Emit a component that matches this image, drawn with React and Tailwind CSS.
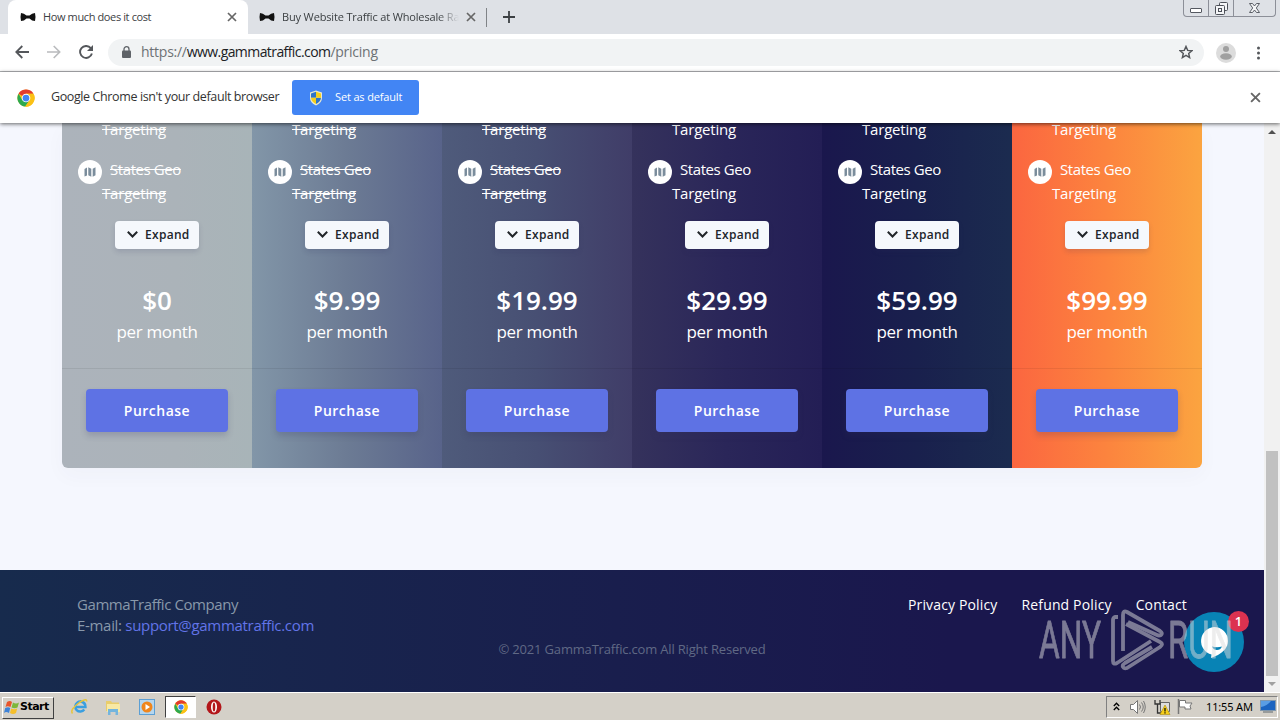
import React from 'react';

const plans = [
  { price: '$0', off: true, bg: 'bg-[linear-gradient(90deg,#acb3bb,#abb3b9_60%,#a8b4b8)]' },
  { price: '$9.99', off: true, bg: 'bg-[linear-gradient(90deg,#8296a8,#6c7b94_50%,#58638a)]' },
  { price: '$19.99', off: true, bg: 'bg-[linear-gradient(90deg,#4f5b7b,#474f73_50%,#403d68)]' },
  { price: '$29.99', off: false, bg: 'bg-[linear-gradient(90deg,#35325c,#2a2659_50%,#231e55)]' },
  { price: '$59.99', off: false, bg: 'bg-[linear-gradient(90deg,#1a174d,#19204d_50%,#1b2b4f)]' },
  { price: '$99.99', off: false, bg: 'bg-[linear-gradient(90deg,#fb6640,#fc843e_50%,#fba440)]' },
];

const BowTie = () => (
  <svg width="16" height="10" viewBox="0 0 16 10">
    <path d="M1 1q3 0 5.500 2.500h3Q12 1 15 1q1 4 0 8-3 0-5.500-2.500h-3Q4 9 1 9 0 5 1 1z" fill="#111" />
  </svg>
);

const Cross = ({ size = 10 }) => (
  <svg width={size} height={size} viewBox="0 0 10 10">
    <path d="M1 1l8 8M9 1L1 9" stroke="#666" strokeWidth="1.700" fill="none" />
  </svg>
);

const ChromeLogo = ({ size = 18 }) => (
  <svg width={size} height={size} viewBox="0 0 48 48">
    <circle cx="24" cy="24" r="23" fill="#fbc116" />
    <path d="M24 24L4.100 12.500A23 23 0 0 1 43.900 12.500H24z" fill="#e33b2e" />
    <path d="M4.100 12.500A23 23 0 0 0 22 46.900L34 29.500 24 24 14 29.500z" fill="#2da94f" />
    <path d="M24 12.500h19.900A23 23 0 0 1 22 46.900L34 29.500z" fill="#fbc116" />
    <circle cx="24" cy="24" r="11.500" fill="#fff" />
    <circle cx="24" cy="24" r="9" fill="#4285f4" />
  </svg>
);

const Shield = () => (
  <svg width="14" height="16" viewBox="0 0 14 16">
    <path d="M7 .5l6 2V8q0 5-6 7.500Q1 13 1 8V2.500z" fill="#e8e8d0" />
    <path d="M7 1.800v6H2V3.400zM7 7.800h5q-.3 4-5 6.300z" fill="#2f74c8" />
    <path d="M7 1.800v6h5V3.400zM7 7.800H2q.3 4 5 6.300z" fill="#f5cf1c" />
  </svg>
);

const TabStrip = () => (
  <div className="h-[34px] bg-[#dee1e6] flex items-start pl-2 text-[11px] tracking-[-0.38px] text-[#3c4043]">
    <div className="w-[240px] h-[34px] bg-white rounded-t-lg flex items-center pl-3 pr-[11px]">
      <BowTie />
      <span className="ml-[7px] flex-1 whitespace-nowrap">How much does it cost</span>
      <Cross />
    </div>
    <div className="w-[238px] h-[34px] flex items-center pl-[11px] pr-[10px]">
      <BowTie />
      <span className="ml-[7px] w-[177px] tracking-[-0.15px] whitespace-nowrap overflow-hidden [mask-image:linear-gradient(90deg,#000_88%,transparent)]">
        Buy Website Traffic at Wholesale Rates
      </span>
      <span className="ml-auto"><Cross /></span>
    </div>
    <div className="w-px h-[19px] mt-2 bg-[#808387]" />
    <svg className="ml-4 mt-[11px]" width="12" height="12" viewBox="0 0 12 12">
      <path d="M6 0v12M0 6h12" stroke="#3c4043" strokeWidth="1.800" />
    </svg>
    <div className="ml-auto mr-[4px] h-[17px] w-[93px] flex border border-t-0 border-[#8c8f98] rounded-b-[4px]">
      <div className="w-[25px] border-r border-[#8c8f98] flex justify-center pt-2">
        <div className="w-3 h-[5px] border border-[#555961] rounded-[1px] bg-white" />
      </div>
      <div className="w-[25px] border-r border-[#8c8f98] flex justify-center pt-[2px]">
        <svg width="13" height="13" viewBox="0 0 13 13" fill="#f4f5f7" stroke="#4c5058">
          <rect x="4.500" y=".5" width="8" height="8" rx="1" />
          <rect x=".5" y="3.500" width="9" height="9" rx="1" />
          <rect x="3.500" y="6.500" width="3" height="3" />
        </svg>
      </div>
      <div className="flex-1 flex justify-center pt-[3px]">
        <svg width="11" height="10" viewBox="0 0 11 10">
          <path d="M.5.5h3l2 2.500 2-2.500h3L7.300 5l3.200 4.500h-3l-2-2.500-2 2.500h-3L3.700 5z" fill="#f4f5f7" stroke="#4c5058" strokeWidth=".9" />
        </svg>
      </div>
    </div>
  </div>
);

const Toolbar = () => (
  <div className="h-[38px] bg-white border-b border-[#b3b5b8] flex items-center">
    <svg className="ml-[15px] -mt-px" width="14" height="14" viewBox="0 0 14 14" fill="none" stroke="#54575b" strokeWidth="1.800">
      <path d="M14 7H1.500M7.300 1L1.300 7l6 6" />
    </svg>
    <svg className="ml-[18px] -mt-px" width="14" height="14" viewBox="0 0 14 14" fill="none" stroke="#b9bbbd" strokeWidth="1.600">
      <path d="M0 7h12.500M6.700 1l6 6-6 6" />
    </svg>
    <svg className="ml-[18px] -mt-px" width="14" height="14" viewBox="0 0 14 14" fill="none">
      <path d="M11.800 3.200A6 6 0 1 0 12.900 8.500" stroke="#54575b" strokeWidth="1.900" />
      <path d="M14 0v6H8z" fill="#54575b" />
    </svg>
    <div className="ml-[15px] w-[1096px] h-[27px] rounded-full bg-[#f1f3f4] flex items-center pl-[14px] pr-[11px]">
      <svg className="-mt-px" width="9" height="12" viewBox="0 0 9 12">
        <path d="M2 5V3.200a2.500 2.500 0 0 1 5 0V5" fill="none" stroke="#5f6368" strokeWidth="1.300" />
        <rect y="4.500" width="9" height="7.500" rx="1" fill="#5f6368" />
      </svg>
      <span className="ml-[10px] -mt-px text-[14px] leading-5 tracking-[-0.25px] whitespace-nowrap text-[#6d7175]">
        https://<span className="text-[#202124] tracking-[-0.58px]">www.gammatraffic.com</span>/pricing
      </span>
      <svg className="ml-auto -mt-px" width="14" height="14" viewBox="0 0 24 24" fill="none" stroke="#54575b" strokeWidth="2.500">
        <path d="M12 2.500l2.900 6.700 7.100.6-5.400 4.700 1.600 7.100L12 17.900l-6.200 3.700 1.600-7.100L2 9.800l7.100-.6z" />
      </svg>
    </div>
    <svg className="ml-3" width="20" height="20" viewBox="0 0 20 20">
      <circle cx="10" cy="10" r="10" fill="#dcdcdc" />
      <circle cx="10" cy="6" r="3" fill="#a0a0a0" />
      <ellipse cx="10" cy="13.500" rx="5.800" ry="3.200" fill="#a0a0a0" />
    </svg>
    <svg className="ml-5" width="4" height="14" viewBox="0 0 4 14" fill="#54575b">
      <circle cx="2.500" cy="2" r="1.500" />
      <circle cx="2.500" cy="7" r="1.500" />
      <circle cx="2.500" cy="12" r="1.500" />
    </svg>
  </div>
);

const InfoBar = () => (
  <div className="relative z-10 h-[51px] bg-white flex items-center pl-[17px] pr-[19px] shadow-[0_1px_4px_rgba(0,0,0,0.6)]">
    <ChromeLogo />
    <span className="ml-4 w-[228px] text-[12.5px] tracking-[-0.39px] whitespace-nowrap text-[#333]">Google Chrome isn't your default browser</span>
    <button className="ml-[13px] w-[127px] h-[35px] rounded-[3px] bg-[#4285f4] text-white text-[11px] tracking-[-0.15px] flex items-center pl-[17px]">
      <Shield />
      <span className="ml-3 whitespace-nowrap">Set as default</span>
    </button>
    <span className="ml-auto"><Cross size={11} /></span>
  </div>
);

const Plan = ({ plan }) => (
  <div className={`w-[190px] h-[345px] flex flex-col items-center text-white ${plan.bg}`}>
    <div className={`self-start pl-10 h-16 text-[15px] leading-6 -mt-[6px] tracking-[-0.2px] ${plan.off ? 'line-through' : ''}`}>Targeting</div>
    <div className="self-start pl-4 -mt-[24px] flex items-start">
      <div className="mt-[3px] w-6 h-6 rounded-full bg-white flex items-center justify-center">
        <svg width="12" height="10" viewBox="0 0 12 10" fill="#7b8d9c">
          <path d="M.5 2L3 .5v8L.5 9.500zM4.300.3l3 1.500v8l-3-1.500zM8.700 1.700L11.500.2v8L8.700 9.700z" />
        </svg>
      </div>
      <span className={`ml-2 text-[15px] leading-6 tracking-[-0.42px] ${plan.off ? 'line-through' : ''}`}>States Geo</span>
    </div>
    <div className={`self-start pl-10 text-[15px] leading-6 -mt-[3px] tracking-[-0.2px] ${plan.off ? 'line-through' : ''}`}>Targeting</div>
    <button className="mt-[16px] w-[84px] h-7 shrink-0 rounded bg-[#f5f8fc] text-[#212529] text-[12px] font-semibold tracking-[0.3px] flex items-center pl-3 shadow-[0_3px_5px_rgba(50,50,93,0.15)]">
      <svg className="-mt-px" width="11" height="7" viewBox="0 0 11 7" fill="none" stroke="#212529" strokeWidth="2">
        <path d="M.8.8l4.700 4.700L10.200.8" />
      </svg>
      <span className="ml-[7px]">Expand</span>
    </button>
    <div className="mt-[33px] text-[26px] leading-9 font-semibold">{plan.price}</div>
    <div className="mt-[1px] text-[17px] leading-[26px] tracking-[-0.35px]">per month</div>
    <div className="mt-[23px] w-full border-t border-black/[0.07] flex justify-center pt-5">
      <button className="w-[142px] h-[43px] rounded bg-[#5e72e4] text-[14px] font-semibold tracking-[0.5px] shadow-[0_4px_6px_rgba(50,50,93,0.2)]">
        Purchase
      </button>
    </div>
  </div>
);

const ChatBubble = () => (
  <div className="absolute left-[1184px] top-[489px] w-[60px] h-[60px] rounded-full bg-[#0883b5] flex items-center justify-center">
    <svg width="30" height="34" viewBox="0 0 30 34">
      <path d="M15 2a14 14 0 0 1 14 14c0 7-5 11-10 14l-7 3 .5-3.500A14 14 0 0 1 15 2z" fill="#fff" />
      <path d="M13 21.500q5 1.500 10 0-1.500 3.500-5 3.500t-5-3.500z" fill="#0883b5" />
    </svg>
    <div className="absolute -top-[1px] -right-[5px] w-[21px] h-[21px] rounded-full bg-[#dc3250] text-white text-[13px] leading-[20px] font-semibold text-center">1</div>
  </div>
);

const Watermark = () => (
  <div className="absolute left-[1038px] top-[485px] w-[200px] h-[64px] flex items-center opacity-50">
    <svg width="200" height="64" viewBox="0 0 200 64" fill="none" stroke="#dcdcdc" strokeWidth="3.800" strokeLinejoin="round">
      <text x="1" y="49.500" fill="#dcdcdc" strokeWidth=".8" fontFamily="Roboto, sans-serif" fontSize="51" textLength="62" lengthAdjust="spacingAndGlyphs">ANY</text>
      <path d="M80 9l-3 0q-2 1-2 3v41q0 4 4 2l34-22" />
      <path d="M85 43V7q0-5 4-3l33 19q3 2 1 4-2 1-4 0L90 14" />
      <path d="M88 16l34 18q4 2 0 5L89 60q-3 1-4-1t2-4l27-16" />
      <text x="130" y="49.500" fill="#dcdcdc" strokeWidth=".8" fontFamily="Roboto, sans-serif" fontSize="51" textLength="65" lengthAdjust="spacingAndGlyphs">RUN</text>
    </svg>
  </div>
);

const Page = () => (
  <div className="relative h-[569px] flex bg-[#f5f7fe]">
    <div className="w-[1264px] flex flex-col">
      <div className="h-[447px] pl-[62px]">
        <div className="w-[1140px] flex rounded-b-md overflow-hidden shadow-[0_8px_20px_rgba(50,50,93,0.03)]">
          {plans.map((plan) => <Plan key={plan.price} plan={plan} />)}
        </div>
      </div>
      <footer className="h-[122px] bg-[linear-gradient(90deg,#172b4d,#1a174d_75%)] px-[77px] pt-6">
        <div className="flex justify-between text-[15px] leading-[21px]">
          <div className="text-[#8898aa] tracking-[-0.43px]">
            <div>GammaTraffic Company</div>
            <div className="tracking-[-0.31px]">E-mail: <a className="text-[#6274e8]">support@gammatraffic.com</a></div>
          </div>
          <div className="flex gap-6 text-white text-[14px] tracking-[0.15px]">
            <a>Privacy Policy</a>
            <a>Refund Policy</a>
            <a>Contact</a>
          </div>
        </div>
        <div className="mt-[3px] text-center text-[13px] leading-[20px] tracking-[-0.18px] text-[#606985]">© 2021 GammaTraffic.com All Right Reserved</div>
      </footer>
    </div>
    <div className="w-4 bg-[#f1f1f1] flex flex-col items-center justify-end relative">
      <svg className="absolute top-[6px]" width="8" height="5" viewBox="0 0 8 5"><path d="M0 5l4-4 4 4z" fill="#505050" /></svg>
      <div className="w-3 h-[225px] bg-[#c1c1c1]" />
      <div className="h-4 flex items-center">
        <svg width="8" height="5" viewBox="0 0 8 5"><path d="M0 0l4 4 4-4z" fill="#a0a0a0" /></svg>
      </div>
    </div>
    <ChatBubble />
    <Watermark />
  </div>
);

const Taskbar = () => (
  <div className="h-7 bg-[#d4d0c8] border-t border-white flex items-center pl-[2px] pr-[2px] font-['DejaVu_Sans',sans-serif] text-black">
    <div className="mt-[2px] w-[52px] h-[22px] border border-white border-r-[#404040] border-b-[#404040] flex items-center pl-[1px]">
      <svg width="16" height="15" viewBox="0 0 16 15">
        <path d="M3 2q3-2 5 0L6.500 7q-3-1.500-5 0z" fill="#e8552b" />
        <path d="M9 2.500q3 2 6 0L13.500 7.500q-3 1.500-6 0z" fill="#7db73a" />
        <path d="M1.200 8q3-1.500 5 0L5 13q-3-2-5 0z" fill="#3e83d8" />
        <path d="M7.200 8.500q3 1.500 6 0L12 13q-3 2-6 0z" fill="#f6bf2a" />
      </svg>
      <span className="text-[11px] font-bold tracking-[-0.5px]">Start</span>
    </div>
    <svg className="ml-[17px]" width="17" height="17" viewBox="0 0 17 17" fill="none">
      <path d="M13.800 6.500A5 5 0 1 0 13.300 11.500M4 9h10.500q0-5.500-5.500-5.500" stroke="#3a9fe0" strokeWidth="2.400" />
      <path d="M1.500 15.500q-3-4 7-11 8-5 7-1" stroke="#e6c53c" strokeWidth="1.500" />
    </svg>
    <svg className="ml-[17px]" width="16" height="16" viewBox="0 0 16 16">
      <path d="M1 2h5l1 1.500h7V12H1z" fill="#e9cd6b" />
      <path d="M2 5h13v8H2z" fill="#f8e9a4" />
      <path d="M3 16v-6h10v6h-2.500v-3h-5v3z" fill="#74b5dd" />
    </svg>
    <svg className="ml-[18px]" width="16" height="16" viewBox="0 0 16 16">
      <rect x=".5" y=".5" width="15" height="15" fill="#b5d6ee" stroke="#5c9fd4" />
      <circle cx="8" cy="8" r="5.500" fill="#f0861c" />
      <path d="M6.500 5v6l4.500-3z" fill="#fff" />
    </svg>
    <div className="ml-[10px] w-[31px] h-[22px] bg-white border border-[#404040] border-r-white border-b-white flex items-center justify-center">
      <ChromeLogo size={14} />
    </div>
    <svg className="ml-[10px]" width="16" height="16" viewBox="0 0 16 16">
      <circle cx="8" cy="8" r="7.500" fill="#b3161a" />
      <ellipse cx="8" cy="8" rx="3" ry="5.500" fill="#fff" />
      <ellipse cx="8" cy="8" rx="1.300" ry="4.500" fill="#b3161a" />
    </svg>
    <div className="ml-auto w-[172px] h-[22px] border border-[#808080] border-r-white border-b-white flex items-center pl-[6px]">
      <svg width="7" height="9" viewBox="0 0 7 9" fill="none" stroke="#000" strokeWidth="1.300">
        <path d="M.8 4l2.700-2.800L6.200 4M.8 8l2.700-2.800L6.200 8" />
      </svg>
      <svg className="ml-[10px]" width="16" height="14" viewBox="0 0 16 14" fill="none" stroke="#777">
        <path d="M.5 4.500h3l4-4v13l-4-4h-3z" fill="#fff" />
        <path d="M9.500 4.500q2 2.500 0 5M11.500 2.500q3.500 4.500 0 9M13.500 1q3.500 6 0 12" />
      </svg>
      <svg className="ml-2" width="17" height="16" viewBox="0 0 17 16">
        <path d="M6.500 3.500h9v9h-9z" fill="#ddd" stroke="#666" />
        <path d="M1 1v4h5V1M3.500 5v9H8" fill="none" stroke="#333" strokeWidth="1.300" />
        <path d="M11 6l5 9.500H6z" fill="#f7cf18" stroke="#a98a10" strokeWidth=".6" />
        <path d="M11 9v3.500M11 13.300v1.200" stroke="#000" strokeWidth="1.200" />
      </svg>
      <svg className="ml-[6px]" width="16" height="15" viewBox="0 0 16 15">
        <path d="M1.500 0v15" stroke="#777" strokeWidth="1.500" />
        <path d="M2.500 1.500h6V4h6.500l-2 3 1 3H8V8H2.500z" fill="#fff" stroke="#777" />
      </svg>
      <span className="ml-[13px] w-[48px] mt-px text-[11px] tracking-[-0.15px] whitespace-nowrap font-['Noto_Sans',sans-serif]">11:55 AM</span>
      <svg className="ml-auto mr-px" width="16" height="13" viewBox="0 0 16 13">
        <rect x=".5" y=".5" width="15" height="10" fill="#1c64c0" stroke="#8097ad" />
        <path d="M1 7Q7 6 11 1H1z" fill="#5a9de4" />
        <path d="M3 12h10" stroke="#5d666f" />
      </svg>
    </div>
  </div>
);

const App = () => (
  <div className="w-[1280px] h-[720px] overflow-hidden flex flex-col font-['Open_Sans',sans-serif]">
    <TabStrip />
    <Toolbar />
    <InfoBar />
    <Page />
    <Taskbar />
  </div>
);

export default App;
